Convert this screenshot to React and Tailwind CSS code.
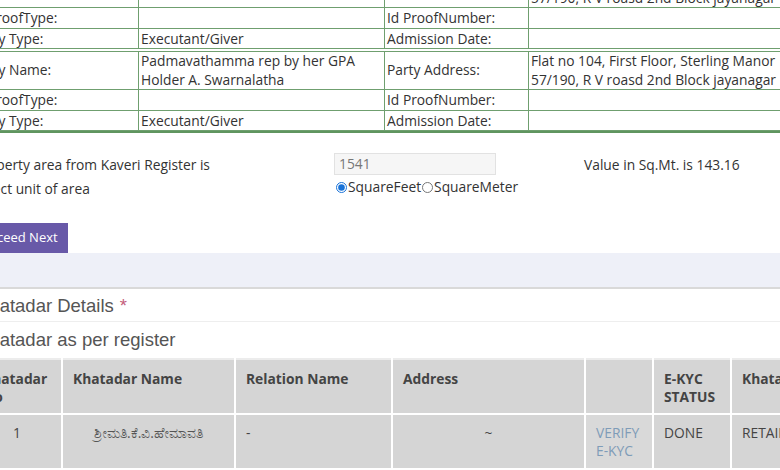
import React from 'react';

const font = { fontFamily: '"Open Sans", "Noto Sans", "DejaVu Sans", sans-serif' };

function PartyTable({ name, address, type }) {
  const cell = 'border border-[#6f9f6f] px-[2px] py-0 leading-[19.5px] align-middle';
  const tall = 'border border-[#6f9f6f] px-[2px] py-0 leading-[18.5px] align-middle';
  return (
    <table className="border-collapse table-fixed w-[885px]">
      <colgroup>
        <col className="w-[169px]" />
        <col className="w-[246px]" />
        <col className="w-[144px]" />
        <col />
      </colgroup>
      <tbody>
        <tr>
          <td className={tall}>Party Name:</td>
          <td className={tall}>{name}</td>
          <td className={tall}>Party Address:</td>
          <td className={tall}>{address}</td>
        </tr>
        <tr>
          <td className={cell}>Id ProofType:</td>
          <td className={cell}></td>
          <td className={cell}>Id ProofNumber:</td>
          <td className={cell}></td>
        </tr>
        <tr>
          <td className={cell}>Party Type:</td>
          <td className={cell}>{type}</td>
          <td className={cell}>Admission Date:</td>
          <td className={cell}></td>
        </tr>
      </tbody>
    </table>
  );
}

const address = (
  <>
    Flat no 104, First Floor, Sterling Manor
    <br />
    57/190, R V roasd 2nd Block jayanagar
  </>
);

const name = (
  <>
    Padmavathamma rep by her GPA
    <br />
    Holder A. Swarnalatha
  </>
);

export default function App() {
  const th = 'border-x-2 border-white px-[10px] pt-[10px] pb-[7px] text-left align-top font-bold leading-[18px]';
  const td = 'border-x-2 border-t-2 border-white px-[10px] pt-[9px] pb-[8px] align-top leading-[18px]';
  return (
    <div className="w-[780px] h-[470px] overflow-hidden bg-white text-[13.8px] text-[#333]" style={font}>
      <div className="-ml-[26px] w-[900px]">
        {/* party tables */}
        <div className="-ml-[5px] -mt-[31px] flex flex-col gap-[2px] border-b-2 border-[#5f955f]">
          <PartyTable name="A. Swarnalatha" address={address} type="Executant/Giver" />
          <PartyTable name={name} address={address} type="Executant/Giver" />
        </div>

        {/* area section */}
        <div className="grid grid-cols-[360px_250px_1fr] pt-[20px]">
          <div className="flex flex-col gap-[6px] pt-[3px]">
            <div className="leading-[18px]">Property area from Kaveri Register is</div>
            <div className="leading-[18px]">Select unit of area</div>
          </div>
          <div className="flex flex-col">
            <div className="h-[22px] w-[162px] border border-[#e2e2e2] bg-[#f6f6f6] px-[4px] leading-[20px] text-[#777]">
              1541
            </div>
            <label className="mt-[3px] flex items-center leading-[18px]">
              <input type="radio" name="unit" defaultChecked className="m-0 ml-[2px] h-[11px] w-[11px] accent-[#1a73d8]" />
              <span className="ml-[1px]">SquareFeet</span>
              <input type="radio" name="unit" className="m-0 ml-[1px] h-[11px] w-[11px]" />
              <span className="ml-[1px]">SquareMeter</span>
            </label>
          </div>
          <div className="pt-[3px] leading-[18px]">Value in Sq.Mt. is 143.16</div>
        </div>

        <div className="mt-[25px] flex">
          <button type="button" className="-ml-[8px] h-[30px] bg-[#6859a8] px-[10px] text-[13px] text-white">
            Proceed Next
          </button>
        </div>

        <div className="h-[36px] border-b-2 border-[#d9d9d9] bg-[#eef0f8]"></div>

        {/* khatadar */}
        <div style={{ fontFamily: '"Liberation Sans", Arial, sans-serif' }} className="text-[18.5px] text-[#555]">
          <div className="ml-[3px] flex h-[33px] items-center border-b border-[#eeeeee] pt-[1px]">
            Khatadar Details <span className="ml-[6px] text-[#c4607c]">*</span>
          </div>
          <div className="ml-[3px] flex h-[36px] items-center">Khatadar as per register</div>
        </div>

        <table className="-ml-[3px] border-collapse table-fixed w-[920px] bg-[#d5d5d5] text-[#444]">
          <colgroup>
            <col className="w-[90px]" />
            <col className="w-[173px]" />
            <col className="w-[157px]" />
            <col className="w-[193px]" />
            <col className="w-[68px]" />
            <col className="w-[78px]" />
            <col />
          </colgroup>
          <thead>
            <tr className="border-t-2 border-[#ececec]">
              <th className={th}>Khatadar No</th>
              <th className={th}>Khatadar Name</th>
              <th className={th}>Relation Name</th>
              <th className={th}>Address</th>
              <th className={th}></th>
              <th className={th}>E-KYC STATUS</th>
              <th className={th}>Khata Status</th>
            </tr>
          </thead>
          <tbody>
            <tr className="text-[#444]">
              <td className={td + ' text-center'}>1</td>
              <td className={td + ' text-center text-[#555]'}>ಶ್ರೀಮತಿ.ಕೆ.ವಿ.ಹೇಮಾವತಿ</td>
              <td className={td}>-</td>
              <td className={td + ' text-center'}>~</td>
              <td className={td + ' text-[#7f9cb8] bg-[#d9d9d9]'}>VERIFY E-KYC</td>
              <td className={td}>DONE</td>
              <td className={td}>RETAINED</td>
            </tr>
          </tbody>
        </table>
      </div>
    </div>
  );
}
